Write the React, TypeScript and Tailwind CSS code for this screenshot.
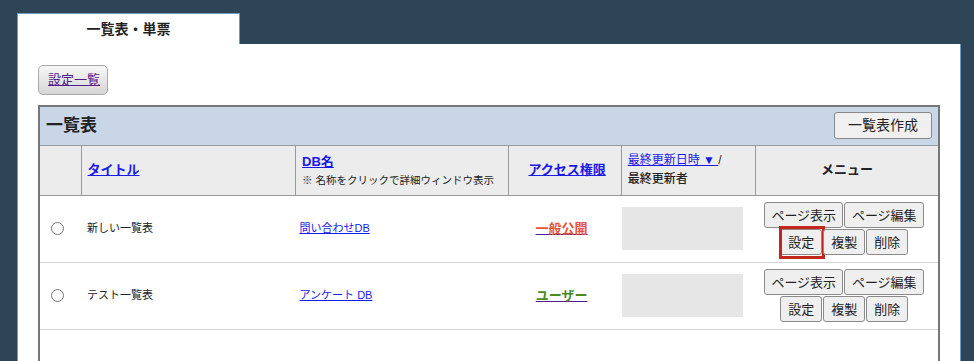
// ── Types ──────────────────────────────────────────────────────────────────────

type Row = {
  title: string;
  db: string;
  access: "public" | "user";
  highlight?: boolean;
};

const rows: Row[] = [
  { title: "新しい一覧表", db: "問い合わせDB", access: "public", highlight: true },
  { title: "テスト一覧表", db: "アンケート DB", access: "user" },
];

// ── MenuButton ─────────────────────────────────────────────────────────────────

function MenuButton({ label, w, marked }: { label: string; w: string; marked?: boolean }) {
  return (
    <span className="relative inline-flex">
      <button
        className={`${w} flex h-[26px] items-center justify-center rounded-[3px] border border-[#8a8a8a] bg-[#efefef] text-[13px] leading-none text-[#222]`}
      >
        {label}
      </button>
      {marked && (
        <span className="pointer-events-none absolute -left-px -top-[3px] h-[33px] w-[46px] border-[3px] border-[#c3261b]" />
      )}
    </span>
  );
}

// ── App ────────────────────────────────────────────────────────────────────────

export default function App() {
  return (
    <div className="h-[361px] overflow-hidden bg-[#2d4557] font-['Liberation_Sans','Noto_Sans_CJK_JP',sans-serif] text-[#222]">
      <div className="pl-[17px] pt-[13px]">
        {/* Tab */}
        <div className="flex h-[31px] w-[223px] items-center justify-center border-l border-r border-t border-[#6f9ac2] bg-white text-[14px] font-bold">
          一覧表・単票
        </div>

        {/* Panel */}
        <div className="h-[400px] w-[944px] border-l border-r border-[#6f9ac2] bg-white pl-[20px] pt-[21px]">
          <button className="flex h-[30px] w-[70px] items-center justify-center rounded-[5px] border border-[#a9a9a9] bg-gradient-to-b from-[#f7f7f7] to-[#d6d6d6] pl-[2px] text-[13px] text-[#551a8b] underline">
            設定一覧
          </button>

          <table className="mt-[10px] w-[902px] table-fixed border-collapse border-2 border-[#777]">
            <colgroup>
              <col className="w-[42px]" />
              <col className="w-[214px]" />
              <col className="w-[213px]" />
              <col className="w-[112px]" />
              <col className="w-[134px]" />
              <col className="w-[183px]" />
            </colgroup>
            <thead>
              <tr className="h-[39px] bg-[#c8d6e7]">
                <th colSpan={6} className="border-b border-[#999] px-[6px] text-left">
                  <div className="flex items-center justify-between">
                    <span className="text-[17px] font-bold">一覧表</span>
                    <button className="flex h-[27px] w-[98px] items-center justify-center rounded-[3px] border border-[#888] bg-[#f0f0f0] text-[14px] font-normal text-[#222]">
                      一覧表作成
                    </button>
                  </div>
                </th>
              </tr>
              <tr className="h-[50px] bg-[#ececec] text-[13px]">
                <th className="border-b border-r border-[#999]" />
                <th className="border-b border-r border-[#999] px-[6px] text-left font-bold">
                  <a className="text-[#1a1ae6] underline">タイトル</a>
                </th>
                <th className="border-b border-r border-[#999] pl-[6px] pr-0 text-left align-middle">
                  <a className="font-bold text-[#1a1ae6] underline">DB名</a>
                  <div className="whitespace-nowrap text-[10.5px] font-normal leading-[16px]">※ 名称をクリックで詳細ウィンドウ表示</div>
                </th>
                <th className="border-b border-r border-[#999] pl-[4px] text-center font-bold">
                  <a className="text-[#1a1ae6] underline">アクセス権限</a>
                </th>
                <th className="border-b border-r border-[#999] px-[6px] text-left text-[12px] font-normal leading-[19px]">
                  <a className="text-[#1a1ae6] underline">最終更新日時 ▼ </a>/
                  <div className="font-medium">最終更新者</div>
                </th>
                <th className="border-b border-[#999] text-center font-bold">メニュー</th>
              </tr>
            </thead>
            <tbody>
              {rows.map((r) => (
                <tr key={r.title} className="h-[67px] border-b border-[#d4d4d4]">
                  <td className="pl-[11px]">
                    <span className="block h-[13px] w-[13px] rounded-full border border-[#777] bg-white" />
                  </td>
                  <td className="px-[6px] text-[11px]">{r.title}</td>
                  <td className="px-[4px] text-[11px]">
                    <a className="text-[#1a1ae6] underline">{r.db}</a>
                  </td>
                  <td className="pr-[7px] text-center text-[13px] font-bold">
                    <a className="text-[#551a8b] underline">
                      {r.access === "public" ? (
                        <span className="text-[#e5533a]">一般公開</span>
                      ) : (
                        <span className="text-[#4b8a1c]">ユーザー</span>
                      )}
                    </a>
                  </td>
                  <td className="px-0">
                    <div className="ml-px h-[43px] w-[121px] bg-[#e6e6e6]" />
                  </td>
                  <td>
                    <div className="flex flex-col items-center gap-px pr-[5px]">
                      <div className="flex gap-px">
                        <MenuButton label="ページ表示" w="w-[79px]" />
                        <MenuButton label="ページ編集" w="w-[80px]" />
                      </div>
                      <div className="flex gap-px">
                        <MenuButton label="設定" w="w-[42px]" marked={r.highlight} />
                        <MenuButton label="複製" w="w-[42px]" />
                        <MenuButton label="削除" w="w-[42px]" />
                      </div>
                    </div>
                  </td>
                </tr>
              ))}
              <tr className="h-[60px]">
                <td colSpan={6} />
              </tr>
            </tbody>
          </table>
        </div>
      </div>
    </div>
  );
}
